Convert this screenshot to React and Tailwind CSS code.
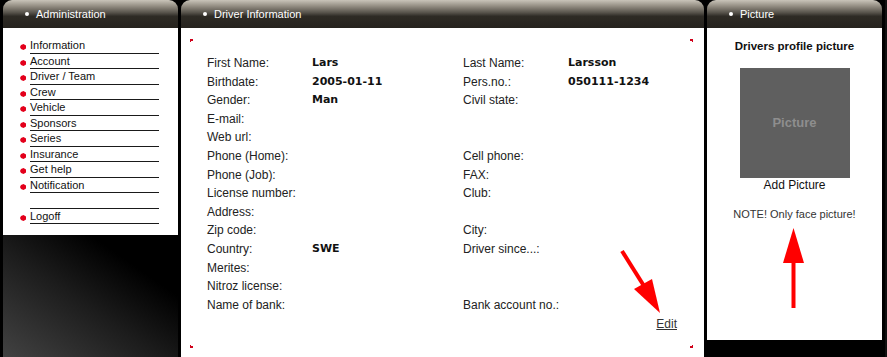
import React from 'react';

const sans = "font-['Liberation_Sans',Arial,sans-serif]";
const bold = "font-['DejaVu_Sans',Verdana,sans-serif] font-bold text-[11px]";

const navItems = [
  'Information', 'Account', 'Driver / Team', 'Crew', 'Vehicle', 'Sponsors',
  'Series', 'Insurance', 'Get help', 'Notification', '', 'Logoff'
];

const rows = [
  ['First Name:', 'Lars', 'Last Name:', 'Larsson'],
  ['Birthdate:', '2005-01-11', 'Pers.no.:', '050111-1234'],
  ['Gender:', 'Man', 'Civil state:', ''],
  ['E-mail:', '', '', ''],
  ['Web url:', '', '', ''],
  ['Phone (Home):', '', 'Cell phone:', ''],
  ['Phone (Job):', '', 'FAX:', ''],
  ['License number:', '', 'Club:', ''],
  ['Address:', '', '', ''],
  ['Zip code:', '', 'City:', ''],
  ['Country:', 'SWE', 'Driver since...:', ''],
  ['Merites:', '', '', ''],
  ['Nitroz license:', '', '', ''],
  ['Name of bank:', '', 'Bank account no.:', '']
];

// panel header with the grey-to-dark gloss and a white dot
const PanelHeader = ({ title }) => (
  <div className="h-[28px] shrink-0 rounded-t-[9px] bg-[linear-gradient(to_bottom,#c9c4b9_0%,#938d82_22%,#57534b_45%,#2e2b25_58%,#26231e_100%)] flex items-center pl-[22px] gap-[7px]">
    <span className="w-[4px] h-[4px] rounded-full bg-white" />
    <span className={`${sans} text-[11px] text-white`}>{title}</span>
  </div>
);

const NavBullet = () => (
  <svg width="7" height="6" viewBox="0 0 7 6" className="mt-[3px]">
    <polygon points="1,1 3.5,0 6,1.5 6,4.5 3.5,6 1,5 0,3" fill="#e3001b" />
  </svg>
);

export default function App() {
  return (
    <div className="w-[887px] h-[357px] overflow-hidden bg-black flex items-stretch pl-[3px] gap-[3px]">
      {/* Administration */}
      <div className="w-[175px] flex flex-col">
        <PanelHeader title="Administration" />
        <div className="bg-white pt-[10px] pb-[11px]">
          <ul>
            {navItems.map((item, i) => (
              <li key={i} className="h-[15.5px] flex items-center pl-[17px]">
                <span className="w-[10px]">{item && <NavBullet />}</span>
                <span className={`${sans} text-[11px] text-[#111] w-[129px] h-full border-b border-[#1a1a1a] leading-[14px]`}>
                  {item}
                </span>
              </li>
            ))}
          </ul>
        </div>
        <div className="flex-1 bg-[linear-gradient(to_top_right,#424242_0%,#1c1c1c_45%,#000_75%)]" />
      </div>

      {/* Driver Information */}
      <div className="w-[523px] flex flex-col relative">
        <PanelHeader title="Driver Information" />
        <div className="flex-1 bg-white pt-[11px] pl-[9px]">
          <div className="relative w-[503px] h-[309px] pt-[15px] pl-[17px]">
            <span className="absolute left-0 top-0 w-[3px] h-[3px] border-t-2 border-l border-[#d0021b]" />
            <span className="absolute right-0 top-0 w-[3px] h-[3px] border-t-2 border-r border-[#d0021b]" />
            <span className="absolute left-0 bottom-0 w-[3px] h-[3px] border-b-2 border-l border-[#d0021b]" />
            <span className="absolute right-0 bottom-0 w-[3px] h-[3px] border-b-2 border-r border-[#d0021b]" />
            <div className="grid grid-cols-[105px_151px_105px_1fr]">
              {rows.map((r, i) => (
                <React.Fragment key={i}>
                  <div className={`${sans} text-[12px] text-[#222] h-[18.6px] leading-[18.6px]`}>{r[0]}</div>
                  <div className={`${bold} text-[#111] h-[18.6px] leading-[18.6px]`}>{r[1]}</div>
                  <div className={`${sans} text-[12px] text-[#222] h-[18.6px] leading-[18.6px] whitespace-nowrap`}>{r[2]}</div>
                  <div className={`${bold} text-[#111] h-[18.6px] leading-[18.6px]`}>{r[3]}</div>
                </React.Fragment>
              ))}
            </div>
            <div className="flex justify-end pr-[16px] h-[18.6px] items-center">
              <a href="#" className={`${sans} text-[12px] text-[#333] underline`}>Edit</a>
            </div>
          </div>
        </div>
        <svg className="absolute left-[420px] top-[240px]" width="80" height="85" viewBox="0 0 80 85">
          <line x1="21" y1="11" x2="43" y2="46" stroke="#ff0000" strokeWidth="4" />
          <polygon points="59,73 33,49 51,39" fill="#ff0000" />
        </svg>
      </div>

      {/* Picture */}
      <div className="w-[175px] flex flex-col relative">
        <PanelHeader title="Picture" />
        <div className="h-[312px] bg-white flex flex-col items-center pt-[39px]">
          <div className={`${sans} font-bold text-[11.5px] text-[#111] leading-[16px] -mt-[29px]`}>Drivers profile picture</div>
          <div className="mt-[14px] w-[110px] h-[110px] bg-[#5f5f5f] flex items-center justify-center">
            <span className={`${sans} font-bold text-[13px] text-[#8e8e8e]`}>Picture</span>
          </div>
          <div className={`${sans} text-[12px] text-[#111] leading-[15px] mt-[0px]`}>Add Picture</div>
          <div className={`${sans} text-[11px] text-[#333] leading-[14px] mt-[14px]`}>NOTE! Only face picture!</div>
        </div>
        <svg className="absolute left-[70px] top-[220px]" width="35" height="95" viewBox="0 0 35 95">
          <line x1="16.5" y1="40" x2="16.5" y2="88" stroke="#ff0000" strokeWidth="4" />
          <polygon points="16.5,8 6,43 27,43" fill="#ff0000" />
        </svg>
      </div>
      <div className="flex-1 bg-[#111]" />
    </div>
  );
}
